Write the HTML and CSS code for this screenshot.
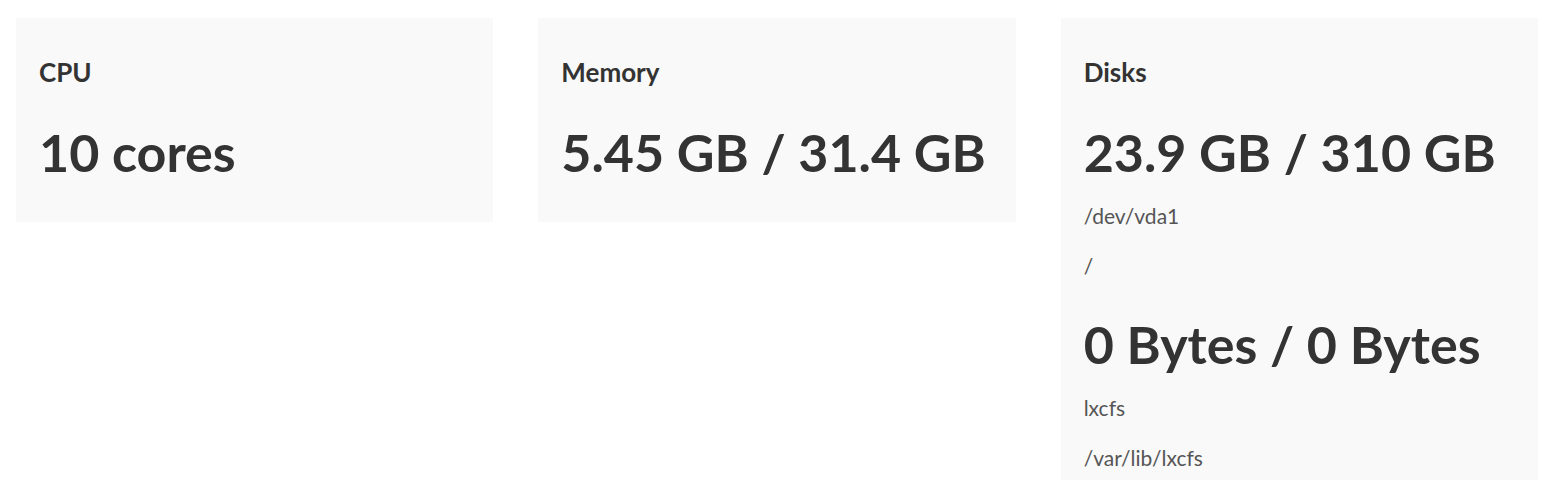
FILE: index.html
```html
<!DOCTYPE html>
<html>
<head>
<meta charset="utf-8">
<link rel="stylesheet" href="styles.css">
</head>
<body>
<main class="stats">
  <section class="card">
    <h3 class="card-title">CPU</h3>
    <div class="value">10 cores</div>
  </section>
  <section class="card">
    <h3 class="card-title">Memory</h3>
    <div class="value">5.45 GB / 31.4 GB</div>
  </section>
  <section class="card">
    <h3 class="card-title">Disks</h3>
    <div class="disk">
      <div class="value">23.9 GB / 310 GB</div>
      <p class="meta">/dev/vda1</p>
      <p class="meta">/</p>
    </div>
    <div class="disk">
      <div class="value">0 Bytes / 0 Bytes</div>
      <p class="meta">lxcfs</p>
      <p class="meta">/var/lib/lxcfs</p>
    </div>
  </section>
</main>
</body>
</html>
```

FILE: styles.css
```css
html, body {
  margin: 0;
  padding: 0;
  background: #ffffff;
}

body {
  font-family: "Source Sans Pro", Lato, "Noto Sans", sans-serif;
  color: #333333;
}

.stats {
  display: grid;
  grid-template-columns: repeat(3, minmax(0, 1fr));
  column-gap: 45px;
  align-items: start;
  padding: 18px 18px 0 16px;
}

.card {
  background: #f9f9f9;
  padding: 38px 24px 38px 23px;
  min-width: 0;
}

.card-title {
  margin: 0;
  font-size: 26px;
  font-weight: 700;
  line-height: 32px;
}

.value {
  font-size: 52px;
  font-weight: 700;
  line-height: 64px;
  margin-top: 32px;
  white-space: nowrap;
}

.meta {
  margin: 0;
  font-size: 21px;
  line-height: 50px;
  color: #555555;
}

.value + .meta {
  margin-top: 7px;
}

.disk + .disk .value {
  margin-top: 21px;
}
```
